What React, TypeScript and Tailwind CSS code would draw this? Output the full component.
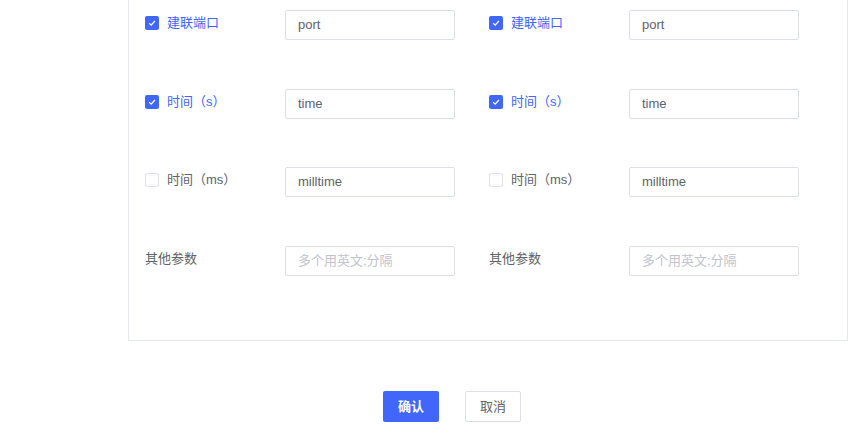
import React from 'react';

type Field = {
  label: string;
  value?: string;
  placeholder?: string;
  checkable: boolean;
  checked?: boolean;
};

const fields: Field[] = [
  { label: '建联端口', value: 'port', checkable: true, checked: true },
  { label: '时间（s）', value: 'time', checkable: true, checked: true },
  { label: '时间（ms）', value: 'milltime', checkable: true, checked: false },
  { label: '其他参数', placeholder: '多个用英文;分隔', checkable: false },
];

const Check = ({ checked }: { checked?: boolean }) =>
  checked ? (
    <span className="flex w-[14px] h-[14px] items-center justify-center rounded-[2px] bg-[#4066fa]">
      <svg width="10" height="10" viewBox="0 0 10 10" fill="none">
        <path d="M2.2 5.2 4.2 7.1 7.9 3" stroke="white" strokeWidth="1.3" />
      </svg>
    </span>
  ) : (
    <span className="block w-[14px] h-[14px] rounded-[2px] border border-[#dcdfe6] bg-white" />
  );

const Row = ({ f }: { f: Field }) => (
  <div className="flex items-center h-[30px]">
    <div className="flex items-center w-[140px] -mt-[4px]">
      {f.checkable && <Check checked={f.checked} />}
      <span
        className={`text-[13px] ${f.checkable ? 'ml-2' : ''} ${
          f.checked ? 'text-[#4066fa]' : 'text-[#606266]'
        }`}
      >
        {f.label}
      </span>
    </div>
    <div className="w-[170px] h-[30px] border border-[#dcdfe6] rounded-[2px] bg-white flex items-center px-3 text-[13px]">
      {f.value ? (
        <span className="text-[#606266]">{f.value}</span>
      ) : (
        <span className="text-[#c0c4cc]">{f.placeholder}</span>
      )}
    </div>
  </div>
);

const Column = () => (
  <div className="flex flex-col gap-[48.6px] w-[344px]">
    {fields.map((f) => (
      <Row key={f.label} f={f} />
    ))}
  </div>
);

export default function App() {
  return (
    <div
      className="w-[858px] h-[434px] bg-white overflow-hidden"
      style={{ fontFamily: '"Liberation Sans", "Noto Sans CJK SC", sans-serif' }}
    >
      <div className="ml-[128px] w-[720px] h-[341px] border border-t-0 border-[#e4e7ed] pt-[10px] pl-[16px] flex">
        <Column />
        <Column />
      </div>
      <div className="flex gap-[26px] pl-[383px] mt-[50px]">
        <button className="w-[56px] h-[31px] rounded-[2px] bg-[#4066fa] text-white text-[13px] font-bold">
          确认
        </button>
        <button className="w-[56px] h-[31px] rounded-[2px] border border-[#dcdfe6] bg-white text-[#606266] text-[13px]">
          取消
        </button>
      </div>
    </div>
  );
}
